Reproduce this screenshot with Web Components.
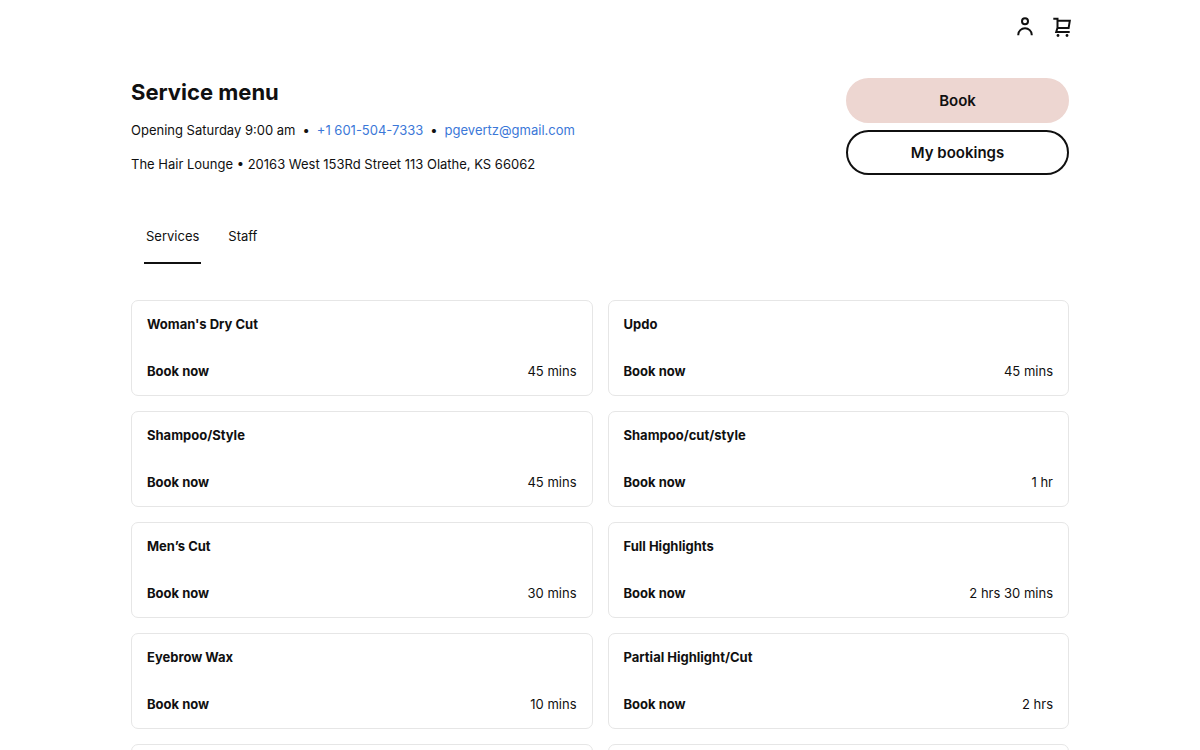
<!DOCTYPE html>
<html lang="en">
<head>
<meta charset="utf-8">
<meta name="viewport" content="width=device-width, initial-scale=1">
<title>Service menu</title>
<style>
    body {
        margin: 0;
        background: #fff;
        color: #101010;
        font: 13px/20px Inter, "Liberation Sans", sans-serif;
    }
</style>
</head>
<body>
<booking-page>
    <top-bar slot="top"></top-bar>
    <shop-header slot="header" heading="Service menu">
        <span slot="hours">Opening Saturday 9:00 am</span>
        <a slot="phone" href="tel:+16015047333">+1 601-504-7333</a>
        <a slot="email" href="mailto:pgevertz@gmail.com">pgevertz@gmail.com</a>
        <span slot="address">The Hair Lounge • 20163 West 153Rd Street 113 Olathe, KS 66062</span>
        <pill-button slot="actions" variant="primary">Book</pill-button>
        <pill-button slot="actions" variant="outline">My bookings</pill-button>
    </shop-header>
    <tab-bar></tab-bar>
    <service-list></service-list>
</booking-page>

<script>
class BookingPage extends HTMLElement {
    constructor() {
        super();
        this.attachShadow({ mode: 'open' });
        this.shadowRoot.innerHTML = `
            <style>
                :host { display: block; }
                main { max-width: 938px; margin: 0 auto; padding: 0 16px 32px; }
            </style>
            <slot name="top"></slot>
            <main>
                <slot name="header"></slot>
                <slot></slot>
            </main>
        `;
    }
}

class TopBar extends HTMLElement {
    constructor() {
        super();
        this.attachShadow({ mode: 'open' });
        this.shadowRoot.innerHTML = `
            <style>
                :host { display: block; }
                nav {
                    display: flex;
                    justify-content: flex-end;
                    gap: 13px;
                    max-width: 948px;
                    margin: 0 auto;
                    padding: 15px 16px;
                }
                button { display: block; padding: 0; border: 0; background: none; color: inherit; cursor: pointer; }
                svg { display: block; fill: none; stroke: currentColor; stroke-width: 2; }
            </style>
            <nav>
                <button type="button" aria-label="Account">
                    <svg width="24" height="24" viewBox="0 0 24 24">
                        <circle cx="12" cy="6.3" r="3"/>
                        <path d="M5.3 20.200v-.7a6.700 6.200 0 0 1 13.400 0v.7"/>
                    </svg>
                </button>
                <button type="button" aria-label="Cart">
                    <svg width="24" height="24" viewBox="0 0 24 24">
                        <path d="M3.300 3.800H7.500V12.700L6.200 17H19.700M7.500 5.800H19.800L18.600 13.100H7.500"/>
                        <circle cx="8" cy="20.500" r="1.400" fill="currentColor" stroke="none"/>
                        <circle cx="17" cy="20.500" r="1.400" fill="currentColor" stroke="none"/>
                    </svg>
                </button>
            </nav>
        `;
    }
}

class ShopHeader extends HTMLElement {
    constructor() {
        super();
        this.attachShadow({ mode: 'open' });
    }

    connectedCallback() {
        this.shadowRoot.innerHTML = `
            <style>
                :host { display: flex; justify-content: space-between; gap: 32px; padding-top: 24px; }
                h1 { margin: 0 0 14px; font-size: 22px; line-height: 28px; font-weight: 700; }
                p { margin: 0 0 14px; }
                .contact { display: flex; flex-wrap: wrap; gap: 7px; }
                ::slotted(a) { color: #3b78d8; text-decoration: none; }
                .actions { display: flex; flex-direction: column; gap: 7px; flex: 0 0 223px; }
            </style>
            <div>
                <h1>${this.getAttribute('heading')}</h1>
                <p class="contact">
                    <slot name="hours"></slot><span>•</span>
                    <slot name="phone"></slot><span>•</span>
                    <slot name="email"></slot>
                </p>
                <p><slot name="address"></slot></p>
            </div>
            <div class="actions"><slot name="actions"></slot></div>
        `;
    }
}

class PillButton extends HTMLElement {
    constructor() {
        super();
        this.attachShadow({ mode: 'open' });
        this.shadowRoot.innerHTML = `
            <style>
                :host { display: block; }
                button {
                    display: block;
                    width: 100%;
                    padding: 11px 24px;
                    border: 2px solid #edd6d1;
                    border-radius: 24px;
                    background: #edd6d1;
                    color: inherit;
                    font: 600 15px/19px Inter, "Liberation Sans", sans-serif;
                    cursor: pointer;
                }
                :host([variant="outline"]) button { background: #fff; border-color: #101010; }
            </style>
            <button type="button"><slot></slot></button>
        `;
    }
}

class TabBar extends HTMLElement {
    constructor() {
        super();
        this.attachShadow({ mode: 'open' });
        this.active = 'Services';
        this.render();
    }

    render() {
        this.shadowRoot.innerHTML = `
            <style>
                :host { display: block; padding: 28px 13px 36px; }
                div { display: flex; gap: 25px; }
                button {
                    padding: 10px 2px 16px;
                    border: 0;
                    border-bottom: 2px solid transparent;
                    background: none;
                    color: inherit;
                    font: inherit;
                    cursor: pointer;
                }
                button[aria-selected="true"] { border-color: #101010; }
            </style>
            <div role="tablist">
                ${['Services', 'Staff'].map(name => `
                    <button type="button" role="tab" aria-selected="${name === this.active}">${name}</button>
                `).join('')}
            </div>
        `;
        this.shadowRoot.querySelectorAll('button').forEach(btn => {
            btn.onclick = () => {
                this.active = btn.textContent;
                this.render();
            };
        });
    }
}

class ServiceCard extends HTMLElement {
    constructor() {
        super();
        this.attachShadow({ mode: 'open' });
        this.shadowRoot.innerHTML = `
            <style>
                :host { display: block; border: 1px solid #e6e6e6; border-radius: 7px; padding: 13px 15px 14px; }
                h2 { margin: 0 0 27px; min-height: 20px; font-size: 13px; line-height: 20px; font-weight: 700; }
                div { display: flex; justify-content: space-between; min-height: 20px; }
                button {
                    padding: 0;
                    border: 0;
                    background: none;
                    color: inherit;
                    font: 700 13px/20px Inter, "Liberation Sans", sans-serif;
                    cursor: pointer;
                }
            </style>
            <h2><slot></slot></h2>
            <div>
                <button type="button">Book now</button>
                <slot name="time"></slot>
            </div>
        `;
    }
}

class ServiceList extends HTMLElement {
    constructor() {
        super();
        this.attachShadow({ mode: 'open' });
        this.data = [
            { name: "Woman's Dry Cut", time: '45 mins' },
            { name: 'Updo', time: '45 mins' },
            { name: 'Shampoo/Style', time: '45 mins' },
            { name: 'Shampoo/cut/style', time: '1 hr' },
            { name: 'Men’s Cut', time: '30 mins' },
            { name: 'Full Highlights', time: '2 hrs 30 mins' },
            { name: 'Eyebrow Wax', time: '10 mins' },
            { name: 'Partial Highlight/Cut', time: '2 hrs' },
            { name: '', time: '' },
            { name: '', time: '' }
        ];
        this.render();
    }

    render() {
        this.shadowRoot.innerHTML = `
            <style>
                :host { display: grid; grid-template-columns: 1fr 1fr; gap: 15px; }
            </style>
            ${this.data.map(item => `
                <service-card>${item.name}<span slot="time">${item.time}</span></service-card>
            `).join('')}
        `;
    }
}

customElements.define('booking-page', BookingPage);
customElements.define('top-bar', TopBar);
customElements.define('shop-header', ShopHeader);
customElements.define('pill-button', PillButton);
customElements.define('tab-bar', TabBar);
customElements.define('service-card', ServiceCard);
customElements.define('service-list', ServiceList);
</script>
</body>
</html>
